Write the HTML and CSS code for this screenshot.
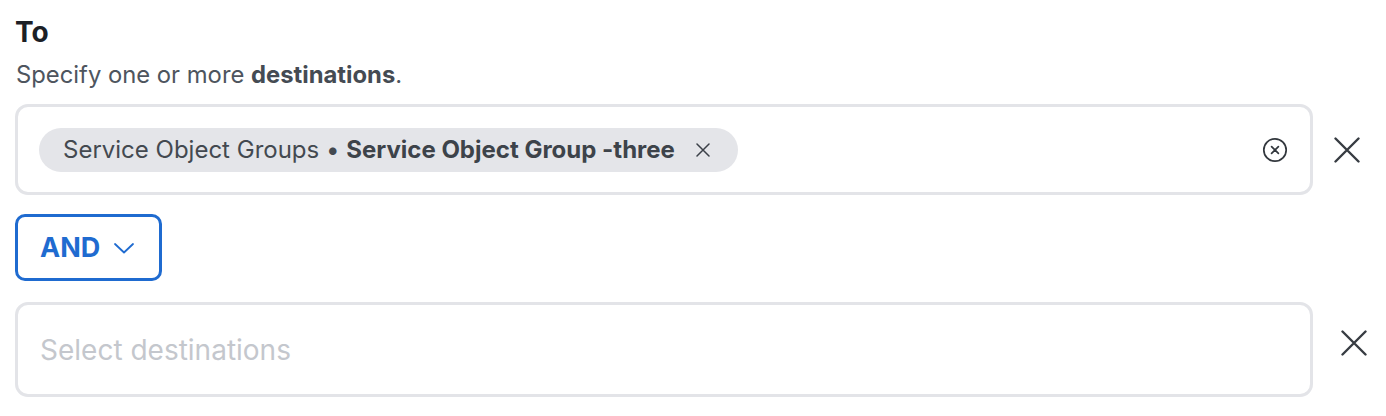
FILE: index.html
```html
<!DOCTYPE html>
<html lang="en">
<head>
<meta charset="utf-8">
<title>To</title>
<link rel="stylesheet" href="styles.css">
</head>
<body>
<div class="field">
  <h2 class="title">To</h2>
  <p class="hint">Specify one or more <strong>destinations</strong>.</p>

  <div class="row">
    <div class="select">
      <span class="chip">
        <span class="chip-text">Service Object Groups • <strong>Service Object Group -three</strong></span>
        <svg class="chip-close" width="14" height="14" viewBox="0 0 14 14"><path d="M1 1L13 13M13 1L1 13" stroke="#3b4048" stroke-width="1.5" fill="none" stroke-linecap="round"/></svg>
      </span>
      <svg class="clear" width="26" height="26" viewBox="0 0 26 26"><circle cx="13" cy="13" r="11.2" stroke="#32373d" stroke-width="1.7" fill="none"/><path d="M9.6 9.6L16.4 16.4M16.4 9.6L9.6 16.4" stroke="#32373d" stroke-width="1.7" stroke-linecap="round"/></svg>
    </div>
    <button class="remove remove-first" type="button" aria-label="Remove">
      <svg width="26" height="26" viewBox="0 0 26 26"><path d="M1.5 1.5L24.5 24.5M24.5 1.5L1.5 24.5" stroke="#373c42" stroke-width="2.4" stroke-linecap="round"/></svg>
    </button>
  </div>

  <button class="op" type="button">AND
    <svg class="chev" width="20" height="11" viewBox="0 0 20 11"><path d="M1 1L10 9.5L19 1" stroke="#1f6bd0" stroke-width="1.8" fill="none" stroke-linecap="round" stroke-linejoin="round"/></svg>
  </button>

  <div class="row">
    <div class="select select-empty">
      <span class="placeholder">Select destinations</span>
    </div>
    <button class="remove remove-second" type="button" aria-label="Remove">
      <svg width="26" height="26" viewBox="0 0 26 26"><path d="M1.5 1.5L24.5 24.5M24.5 1.5L1.5 24.5" stroke="#373c42" stroke-width="2.4" stroke-linecap="round"/></svg>
    </button>
  </div>
</div>
</body>
</html>
```

FILE: styles.css
```css
* { box-sizing: border-box; }
html, body { margin: 0; padding: 0; background: #ffffff; }
body { font-family: Inter, "Noto Sans", "Liberation Sans", sans-serif; color: #454b53; }

.field {
  padding: 16px 0 0 15px;
  display: flex;
  flex-direction: column;
  align-items: flex-start;
}

.title {
  margin: 0;
  font-size: 28px;
  line-height: 32px;
  font-weight: 700;
  color: #1c2026;
}

.hint {
  margin: 13px 0 0 1px;
  font-size: 23.8px;
  line-height: 28px;
  color: #4e555e;
}
.hint strong { font-weight: 700; color: #454b53; }

.row {
  display: flex;
  align-items: center;
  margin-top: 15px;
}

.select {
  width: 1298px;
  height: 91px;
  border: 3px solid #e3e4e8;
  border-radius: 13px;
  display: flex;
  align-items: center;
  justify-content: space-between;
  padding: 0 21px 0 21px;
}

.chip {
  display: inline-flex;
  align-items: center;
  height: 44px;
  padding: 0 28px 0 24px;
  border-radius: 22px;
  background: #e4e5e9;
  font-size: 24px;
  color: #434950;
  white-space: nowrap;
}
.chip strong { font-weight: 700; color: #3d434a; }
.chip-close { margin-left: 21px; }

.clear { margin-right: 1px; }

.remove {
  border: 0;
  background: none;
  padding: 0;
  display: flex;
  align-items: center;
  justify-content: center;
  cursor: pointer;
}
.remove-first { margin-left: 21px; }
.remove-second { margin-left: 28px; margin-bottom: 14px; }

.op {
  margin-top: 19px;
  width: 147px;
  height: 67px;
  border: 3px solid #1f6bd0;
  border-radius: 10px;
  background: #fff;
  color: #1f6bd0;
  font-family: Inter, "Noto Sans", "Liberation Sans", sans-serif;
  font-size: 27px;
  font-weight: 700;
  display: flex;
  align-items: center;
  padding: 0 0 0 22px;
  cursor: pointer;
}
.chev { margin-left: 14px; margin-top: 2px; }

.op + .row { margin-top: 21px; }

.select-empty { height: 95px; padding-left: 22px; }
.placeholder {
  font-size: 28px;
  color: #c4c7cd;
}
```
